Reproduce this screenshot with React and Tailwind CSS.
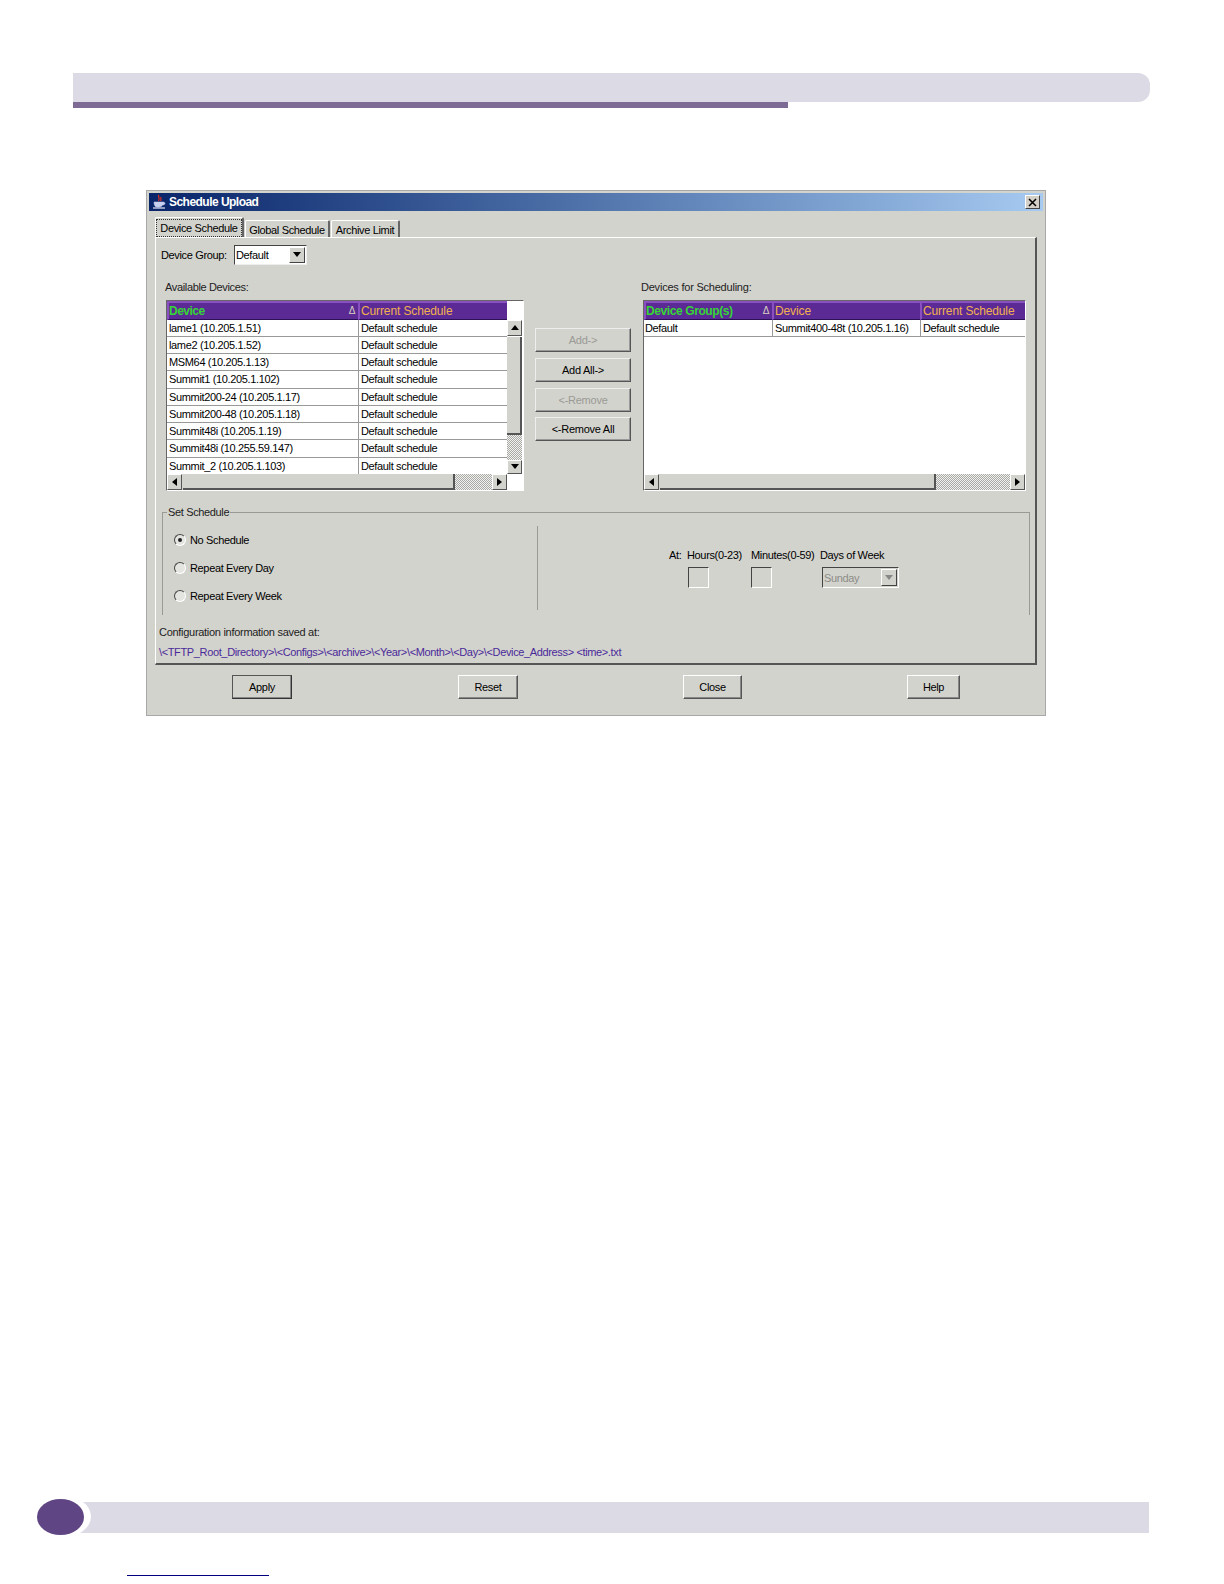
const FONT = "font-['Liberation_Sans',Arial,sans-serif]"

const AVAILABLE = [
  'lame1 (10.205.1.51)',
  'lame2 (10.205.1.52)',
  'MSM64 (10.205.1.13)',
  'Summit1 (10.205.1.102)',
  'Summit200-24 (10.205.1.17)',
  'Summit200-48 (10.205.1.18)',
  'Summit48i (10.205.1.19)',
  'Summit48i (10.255.59.147)',
  'Summit_2 (10.205.1.103)',
]

const Arrow = ({ dir, className = 'fill-black' }) => {
  const points = {
    up: '4,1 8,6 0,6',
    down: '0,1 8,1 4,6',
    left: '6,0 6,8 1,4',
    right: '1,0 1,8 6,4',
  }
  return (
    <svg width="8" height="8" viewBox="0 0 8 8" className={className}>
      <polygon points={points[dir]} />
    </svg>
  )
}

const ScrollButton = ({ dir, className = 'w-[15px] h-[16px]' }) => (
  <div className={`${className} shrink-0 flex items-center justify-center bg-[#d3d3cd] border border-t-white border-l-white border-r-[#555] border-b-[#555]`}>
    <Arrow dir={dir} />
  </div>
)

const Dither = ({ className }) => (
  <div className={`${className} bg-[repeating-conic-gradient(#a8a8a4_0_25%,#f2f2f0_0_50%)] bg-[length:2px_2px]`} />
)

const HScroll = ({ thumb, dither }) => (
  <div className="flex h-[16px] bg-[#d3d3cd]">
    <ScrollButton dir="left" />
    <div className={`${thumb} ml-px border-r-2 border-b-2 border-[#555] bg-[#d3d3cd]`} />
    <Dither className={dither} />
    <ScrollButton dir="right" />
  </div>
)

const VScroll = () => (
  <div className="flex w-[15px] flex-col h-[154px]">
    <ScrollButton dir="up" className="w-[15px] h-[16px]" />
    <div className="h-[98px] mt-px border-r-2 border-b-2 border-[#555] bg-[#d3d3cd]" />
    <Dither className="h-[25px]" />
    <ScrollButton dir="down" className="w-[15px] h-[14px]" />
  </div>
)

const HeaderCell = ({ width, color, tracking, bold, sort, children }) => (
  <div
    className={`${width} h-[19px] shrink-0 flex items-center justify-between pr-[3px] ${bold ? 'font-bold' : 'pl-px'} bg-[#5c2a94] border-t-2 border-l-2 border-t-[#8a4fc0] border-l-[#8a4fc0] border-b border-b-[#2c1058] text-[12px] ${tracking} ${color}`}
  >
    <span className="whitespace-nowrap">{children}</span>
    {sort && <span className="text-[10px] font-normal text-[#d8d0c0] leading-none">Δ</span>}
  </div>
)

const Row = ({ cells, widths, height = 'h-[17px] border-b border-[#999]', pad = 'pl-[2px]' }) => (
  <div className={`flex ${height} bg-white`}>
    {cells.map((text, i) => (
      <div
        key={i}
        className={`${widths[i]} shrink-0 ${i > 0 ? 'pl-[2px] border-l border-[#999]' : pad} text-[11px] leading-[16px] text-black whitespace-nowrap overflow-hidden`}
      >
        {text}
      </div>
    ))}
  </div>
)

// pixel pitch of the rows isn't even in the source picture
const rowHeight = (i) => {
  if (i === AVAILABLE.length - 1) return 'h-[16px]'
  if (i === 3 || i === 7) return 'h-[18px] border-b border-[#999]'
  return 'h-[17px] border-b border-[#999]'
}

const SideButton = ({ disabled, children, className }) => (
  <div
    className={`w-[96px] h-[24px] flex items-center justify-center text-[11px] tracking-[-0.25px] border border-t-[#eee] border-l-[#eee] border-r-[#555] border-b-[#555] shadow-[inset_-1px_-1px_0_#999] ${disabled ? 'text-[#9a9a96]' : 'text-black'} ${className}`}
  >
    {children}
  </div>
)

const ActionButton = ({ width, margin, strong, children }) => (
  <div
    className={`${width} ${margin} h-[24px] flex items-center justify-center text-[11px] text-black border ${strong ? 'border-[#333] border-t-[#555] border-l-[#555]' : 'border-t-white border-l-white border-r-[#555] border-b-[#555]'} shadow-[inset_-1px_-1px_0_#888]`}
  >
    {children}
  </div>
)

const Tab = ({ active, width, children }) => (
  <div
    className={`${width} ${active ? 'h-[20px]' : 'h-[17px] pt-[2px]'} flex items-center justify-center whitespace-nowrap text-[11px] text-black border-t border-l border-white border-r-2 border-r-[#666] rounded-t-[2px]`}
  >
    {active ? <span className="border border-dotted border-[#333] px-[3px] leading-[16px]">{children}</span> : children}
  </div>
)

const Radio = ({ checked, label }) => (
  <div className="flex items-center h-[14px] gap-[4px]">
    <div className="w-[12px] h-[12px] rounded-full flex items-center justify-center border border-t-[#444] border-l-[#444] border-r-white border-b-white bg-[#e4e4e0]">
      {checked && <div className="w-[4px] h-[4px] rounded-full bg-[#222]" />}
    </div>
    <span className="text-[11px] text-black">{label}</span>
  </div>
)

const SunkenBox = () => (
  <div className="w-[21px] h-[21px] border border-t-[#444] border-l-[#444] border-r-white border-b-white" />
)

const JavaIcon = () => (
  <svg width="16" height="16" viewBox="0 0 16 16" className="mx-[2px]">
    <path d="M8 1 C6 3 10 4 7.5 7 M10 3 C9 5 11 5 9.5 7" stroke="#e03020" strokeWidth="1.2" fill="none" />
    <path d="M3 8 H12 C12 8 14 8 14 9.5 C14 11 12 11 11.5 11 C11 12 10 13 8 13 H6 C4 13 3 11 3 8 Z" fill="#c8d0f0" stroke="#c8d0f0" strokeWidth="0.5" />
    <path d="M2 14 H14" stroke="#e8e8f8" strokeWidth="1.2" />
  </svg>
)

const LEFT_WIDTHS = ['w-[191px]', 'w-[149px]']
const RIGHT_WIDTHS = ['w-[128px]', 'w-[148px]', 'w-[105px]']

export default function App() {
  return (
    <div className={`${FONT} tracking-[-0.35px] w-[1224px] h-[1584px] bg-white flex flex-col pt-[73px]`}>
      {/* page header */}
      <div className="ml-[73px]">
        <div className="w-[1077px] h-[29px] bg-[#dcdae4] rounded-r-[12px]" />
        <div className="w-[715px] h-[6px] bg-[#7d6b95]" />
      </div>

      {/* dialog */}
      <div className="ml-[146px] mt-[82px] w-[900px] h-[526px] bg-[#d3d3cd] border border-[#a8a8a8] p-[2px] shrink-0">
        <div className="h-[18px] flex items-center justify-between bg-gradient-to-r from-[#0a246a] to-[#a6caf0] pr-[3px]">
          <div className="flex items-center">
            <JavaIcon />
            <span className="text-[12px] font-bold tracking-[-0.53px] text-white">Schedule Upload</span>
          </div>
          <div className="w-[15px] h-[14px] flex items-center justify-center bg-[#d4d0c8] border border-t-white border-l-white border-r-[#444] border-b-[#444]">
            <svg width="9" height="9" viewBox="0 0 9 9" stroke="black" strokeWidth="1.5">
              <path d="M1 1 L8 8 M8 1 L1 8" />
            </svg>
          </div>
        </div>

        {/* tabs */}
        <div className="ml-[6px] mt-[6px] h-[20px] flex items-end gap-[1px]">
          <Tab active width="w-[89px]">Device Schedule</Tab>
          <Tab width="w-[85px]">Global Schedule</Tab>
          <Tab width="w-[69px]">Archive Limit</Tab>
        </div>

        {/* tab panel */}
        <div className="ml-[6px] w-[882px] h-[428px] border-t border-l border-white border-r-2 border-b-2 border-r-[#555] border-b-[#555] pt-[7px]">
          <div className="flex items-center h-[20px] pl-[5px]">
            <span className="w-[66px] text-[11px] text-black">Device Group:</span>
            <div className="ml-[7px] w-[73px] h-[20px] flex items-center justify-between bg-white border border-t-[#444] border-l-[#444] border-r-[#eee] border-b-[#eee] pr-[1px]">
              <span className="pl-[1px] text-[11px] text-black">Default</span>
              <div className="w-[16px] h-[16px] flex items-center justify-center bg-[#d3d3cd] border border-t-white border-l-white border-r-[#444] border-b-[#444]">
                <Arrow dir="down" />
              </div>
            </div>
          </div>

          <div className="flex mt-[15px] ml-[10px]">
            {/* available devices */}
            <div className="w-[358px]">
              <div className="h-[14px] -ml-px text-[11px] leading-[14px] text-[#222]">Available Devices:</div>
              <div className="mt-[6px] h-[191px] bg-white border border-t-[#666] border-l-[#666] border-r-white border-b-white">
                <div className="flex">
                  <div className="w-[340px] shrink-0 bg-[#d3d3cd]">
                    <div className="flex">
                      <HeaderCell width="w-[191px]" color="text-[#35d535]" tracking="tracking-[-0.5px]" bold sort>Device</HeaderCell>
                      <HeaderCell width="w-[149px]" color="text-[#f0b050]" tracking="tracking-[-0.12px]">Current Schedule</HeaderCell>
                    </div>
                    {AVAILABLE.map((name, i) => (
                      <Row key={name} cells={[name, 'Default schedule']} widths={LEFT_WIDTHS} height={rowHeight(i)} />
                    ))}
                    <HScroll thumb="w-[272px]" dither="w-[37px]" />
                  </div>
                  <div className="flex-1 flex flex-col">
                    <div className="h-[19px]" />
                    <VScroll />
                  </div>
                </div>
              </div>
            </div>

            {/* move buttons */}
            <div className="ml-[11px] w-[96px] pt-[48px]">
              <SideButton disabled>Add-&gt;</SideButton>
              <SideButton className="mt-[6px]">Add All-&gt;</SideButton>
              <SideButton disabled className="mt-[6px]">&lt;-Remove</SideButton>
              <SideButton className="mt-[5px]">&lt;-Remove All</SideButton>
            </div>

            {/* devices for scheduling */}
            <div className="ml-[12px] w-[383px]">
              <div className="h-[14px] -ml-[2px] text-[11px] leading-[14px] tracking-[-0.22px] text-[#222]">Devices for Scheduling:</div>
              <div className="mt-[6px] h-[191px] bg-white border border-t-[#666] border-l-[#666] border-r-white border-b-white flex flex-col">
                <div className="flex">
                  <HeaderCell width="w-[128px]" color="text-[#35d535]" tracking="tracking-[-0.4px]" bold sort>Device Group(s)</HeaderCell>
                  <HeaderCell width="w-[148px]" color="text-[#f0b050]" tracking="tracking-[-0.12px]">Device</HeaderCell>
                  <HeaderCell width="w-[105px]" color="text-[#f0b050]" tracking="tracking-[-0.12px]">Current Schedule</HeaderCell>
                </div>
                <Row cells={['Default', 'Summit400-48t (10.205.1.16)', 'Default schedule']} widths={RIGHT_WIDTHS} pad="pl-px" />
                <div className="flex-1" />
                <HScroll thumb="w-[276px]" dither="w-[74px]" />
              </div>
            </div>
          </div>

          {/* set schedule group */}
          <div className="relative ml-[6px] mt-[21px] w-[868px] h-[103px] flex border-t border-l border-r border-[#9a9a94]">
            <span className="absolute left-[4px] top-[-8px] px-[1px] bg-[#d3d3cd] text-[11px] leading-[14px] text-[#222]">Set Schedule</span>
            <div className="w-[374px] pl-[11px] pt-[20px] flex flex-col gap-[14px]">
              <Radio checked label="No Schedule" />
              <Radio label="Repeat Every Day" />
              <Radio label="Repeat Every Week" />
            </div>
            <div className="w-px h-[84px] mt-[13px] bg-[#9a9a94]" />
            <div className="flex ml-[131px] mt-[35px] text-[11px] leading-[14px] text-black">
              <span className="w-[18px]">At:</span>
              <div className="w-[64px] flex flex-col gap-[5px]">
                <span>Hours(0-23)</span>
                <div className="pl-px"><SunkenBox /></div>
              </div>
              <div className="w-[69px] flex flex-col gap-[5px]">
                <span>Minutes(0-59)</span>
                <SunkenBox />
              </div>
              <div className="flex flex-col gap-[5px]">
                <span>Days of Week</span>
                <div className="ml-[2px] w-[77px] h-[21px] flex items-center justify-between pr-px border border-t-[#444] border-l-[#444] border-r-white border-b-white">
                  <span className="pl-px text-[#8c8c88]">Sunday</span>
                  <div className="w-[16px] h-[17px] flex items-center justify-center border border-t-white border-l-white border-r-[#444] border-b-[#444]">
                    <Arrow dir="down" className="fill-[#888]" />
                  </div>
                </div>
              </div>
            </div>
          </div>

          <div className="ml-[3px] mt-[10px] h-[14px] text-[11px] leading-[14px] tracking-[-0.29px] text-[#222]">Configuration information saved at:</div>
          <div className="ml-[3px] mt-[6px] h-[14px] text-[11px] leading-[14px] tracking-[-0.36px] text-[#4a2a9a] whitespace-nowrap">
            {'\\<TFTP_Root_Directory>\\<Configs>\\<archive>\\<Year>\\<Month>\\<Day>\\<Device_Address> <time>.txt'}
          </div>
        </div>

        {/* dialog buttons */}
        <div className="flex mt-[10px]">
          <ActionButton width="w-[60px]" margin="ml-[83px]" strong>Apply</ActionButton>
          <ActionButton width="w-[60px]" margin="ml-[166px]">Reset</ActionButton>
          <ActionButton width="w-[59px]" margin="ml-[165px]">Close</ActionButton>
          <ActionButton width="w-[53px]" margin="ml-[165px]">Help</ActionButton>
        </div>
      </div>

      {/* page footer */}
      <div className="mt-auto pb-[8px]">
        <div className="relative ml-[80px] w-[1069px] h-[31px] bg-[#dcdae4]">
          <div className="absolute left-[-50px] top-[-7px] w-[61px] h-[43px] rounded-[50%] bg-white flex items-center justify-center">
            <div className="w-[47px] h-[36px] rounded-[50%] bg-[#5f4583]" />
          </div>
        </div>
        <div className="ml-[127px] mt-[42px] w-[142px] h-px bg-[#000080]" />
      </div>
    </div>
  )
}
